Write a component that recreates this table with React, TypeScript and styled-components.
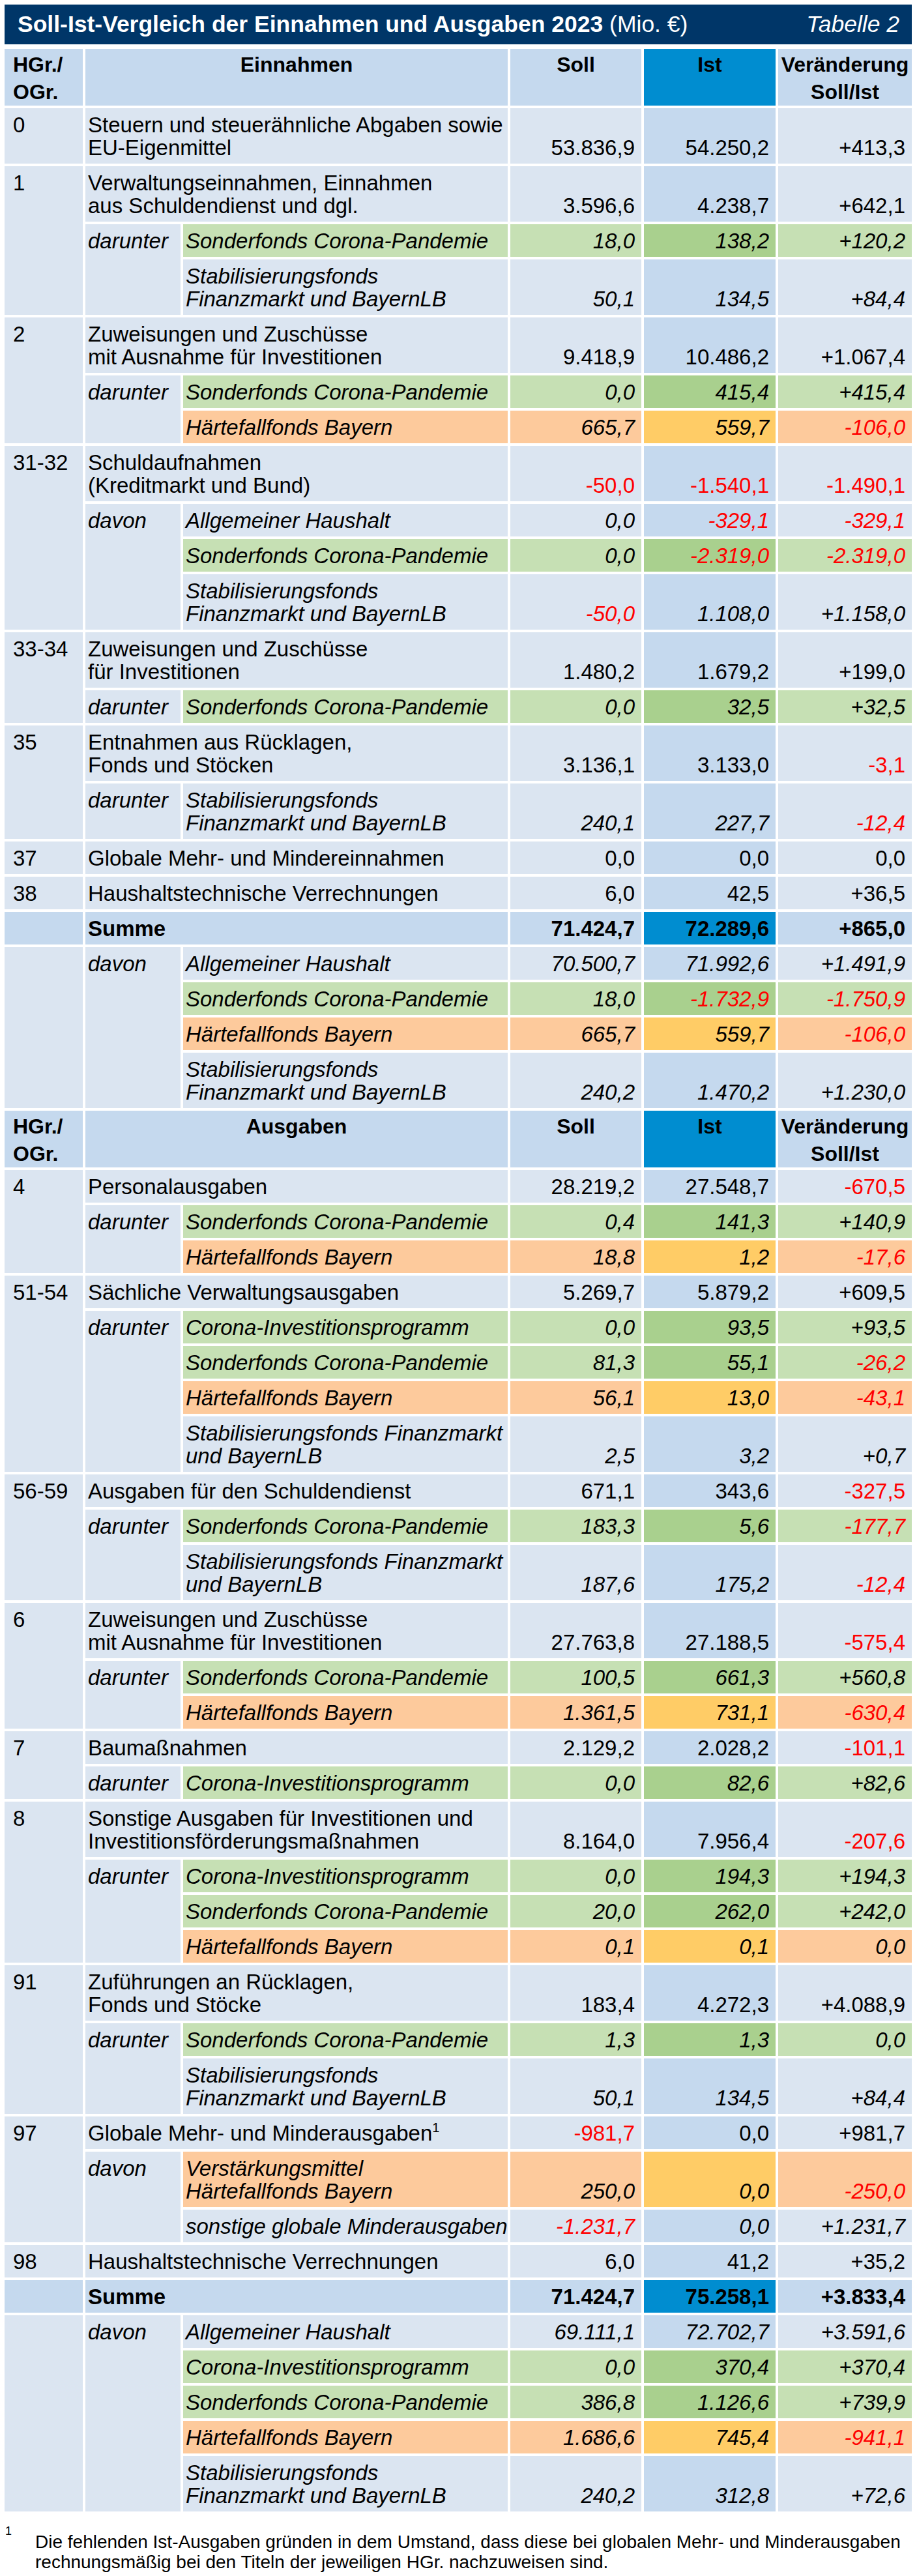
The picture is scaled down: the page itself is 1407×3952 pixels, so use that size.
import React from 'react';
import styled, { createGlobalStyle, css } from 'styled-components';

const GlobalStyle = createGlobalStyle`
  html, body { margin: 0; padding: 0; background: #ffffff; }
  body { font-family: "Liberation Sans", Arial, sans-serif; color: #000; }
`;

const C = {
  navy: '#003668',
  head: '#c5d9ee',
  body: '#dbe5f1',
  istBody: '#c5d9ee',
  istHead: '#008dd0',
  green: '#c6e0b4',
  greenIst: '#a9d08e',
  orange: '#fdca9c',
  orangeIst: '#ffcc66',
  red: '#ff0000',
};

type Tone = 'plain' | 'green' | 'orange' | 'sum';
type Col = 'soll' | 'ist' | 'ver';

const bg = (tone: Tone, col?: Col) => {
  const ist = col === 'ist';
  switch (tone) {
    case 'green':
      return ist ? C.greenIst : C.green;
    case 'orange':
      return ist ? C.orangeIst : C.orange;
    case 'sum':
      return ist ? C.istHead : C.head;
    default:
      return ist ? C.istBody : C.body;
  }
};

const colIndex: Record<Col, number> = { soll: 4, ist: 5, ver: 6 };

const Page = styled.div`
  width: 1392px;
  padding: 7px 8px 0 7px;
`;

const TitleBar = styled.div`
  height: 61px;
  margin-bottom: 7px;
  padding: 0 19px 0 20px;
  background: ${C.navy};
  color: #fff;
  display: flex;
  align-items: center;
  justify-content: space-between;
  font-size: 35.5px;
  white-space: nowrap;
`;

const TitleMain = styled.span`
  font-weight: 700;
`;

const TitleUnit = styled.span`
  font-weight: 400;
`;

const TitleTag = styled.span`
  font-style: italic;
`;

const Table = styled.div`
  display: flex;
  flex-direction: column;
  gap: 4px;
`;

const Grid = styled.div`
  display: grid;
  grid-template-columns: 120px 146px 498px 201px 202px 205px;
  column-gap: 4px;
  row-gap: 4px;
`;

const cellBase = css`
  padding: 8px 4px 7px;
  line-height: 35px;
  font-size: 33px;
  min-width: 0;
  white-space: nowrap;
`;

const HeadCell = styled.div<{ $col: number; $span?: number; $align?: 'left' | 'center'; $ist?: boolean }>`
  grid-column: ${(p) => p.$col} / span ${(p) => p.$span ?? 1};
  height: 87px;
  box-sizing: border-box;
  padding: 3px 0 0 ${(p) => (p.$align === 'left' ? '13px' : '0')};
  line-height: 42px;
  font-size: 32px;
  font-weight: 700;
  white-space: nowrap;
  text-align: ${(p) => p.$align ?? 'center'};
  background: ${(p) => (p.$ist ? C.istHead : C.head)};
`;

const CodeCell = styled.div<{ $span: number; $tone: Tone }>`
  ${cellBase};
  grid-column: 1;
  grid-row: 1 / span ${(p) => p.$span};
  padding-left: 13px;
  background: ${(p) => bg(p.$tone === 'sum' ? 'sum' : 'plain')};
`;

const DescCell = styled.div<{ $tone: Tone }>`
  ${cellBase};
  grid-column: 2 / span 2;
  grid-row: 1;
  padding-right: 0;
  background: ${(p) => bg(p.$tone)};
  font-weight: ${(p) => (p.$tone === 'sum' ? 700 : 400)};
`;

const KeyCell = styled.div<{ $row: number; $span: number }>`
  ${cellBase};
  grid-column: 2;
  grid-row: ${(p) => p.$row} / span ${(p) => p.$span};
  font-style: italic;
  background: ${C.body};
`;

const LabelCell = styled.div<{ $row: number; $tone: Tone }>`
  ${cellBase};
  grid-column: 3;
  grid-row: ${(p) => p.$row};
  padding-right: 0;
  font-style: italic;
  background: ${(p) => bg(p.$tone)};
`;

const NumCell = styled.div<{ $row: number; $col: Col; $tone: Tone; $sub?: boolean; $neg?: boolean }>`
  ${cellBase};
  grid-column: ${(p) => colIndex[p.$col]};
  grid-row: ${(p) => p.$row};
  padding-right: 10px;
  display: flex;
  align-items: flex-end;
  justify-content: flex-end;
  background: ${(p) => bg(p.$tone, p.$col)};
  color: ${(p) => (p.$neg ? C.red : '#000')};
  font-style: ${(p) => (p.$sub ? 'italic' : 'normal')};
  font-weight: ${(p) => (p.$tone === 'sum' ? 700 : 400)};
`;

const Sup = styled.sup`
  font-size: 20px;
  line-height: 0;
  vertical-align: 13px;
`;

const Footnote = styled.div`
  display: flex;
  margin-top: 21px;
`;

const FootMark = styled.div`
  width: 46px;
  flex: none;
  font-size: 18px;
  line-height: 18px;
  padding-left: 1px;
`;

const FootText = styled.div`
  font-size: 28px;
  line-height: 31px;
  margin-top: 10px;
  white-space: nowrap;
`;

type Sub = [React.ReactNode, Tone, string, string, string];

interface Group {
  code: string;
  text: React.ReactNode;
  v: [string, string, string];
  key?: string;
  subs?: Sub[];
}

interface Section {
  title: string;
  groups: Group[];
  sum: [string, string, string];
  totals: Sub[];
}

const SCP = 'Sonderfonds Corona-Pandemie';
const HFB = 'Härtefallfonds Bayern';
const CIP = 'Corona-Investitionsprogramm';
const AH = 'Allgemeiner Haushalt';
const STAB1 = (
  <>
    Stabilisierungsfonds
    <br />
    Finanzmarkt und BayernLB
  </>
);
const STAB2 = (
  <>
    Stabilisierungsfonds Finanzmarkt
    <br />
    und BayernLB
  </>
);

const sections: Section[] = [
  {
    title: 'Einnahmen',
    groups: [
      {
        code: '0',
        text: (
          <>
            Steuern und steuerähnliche Abgaben sowie
            <br />
            EU-Eigenmittel
          </>
        ),
        v: ['53.836,9', '54.250,2', '+413,3'],
      },
      {
        code: '1',
        text: (
          <>
            Verwaltungseinnahmen, Einnahmen
            <br />
            aus Schuldendienst und dgl.
          </>
        ),
        v: ['3.596,6', '4.238,7', '+642,1'],
        key: 'darunter',
        subs: [
          [SCP, 'green', '18,0', '138,2', '+120,2'],
          [STAB1, 'plain', '50,1', '134,5', '+84,4'],
        ],
      },
      {
        code: '2',
        text: (
          <>
            Zuweisungen und Zuschüsse
            <br />
            mit Ausnahme für Investitionen
          </>
        ),
        v: ['9.418,9', '10.486,2', '+1.067,4'],
        key: 'darunter',
        subs: [
          [SCP, 'green', '0,0', '415,4', '+415,4'],
          [HFB, 'orange', '665,7', '559,7', '-106,0'],
        ],
      },
      {
        code: '31-32',
        text: (
          <>
            Schuldaufnahmen
            <br />
            (Kreditmarkt und Bund)
          </>
        ),
        v: ['-50,0', '-1.540,1', '-1.490,1'],
        key: 'davon',
        subs: [
          [AH, 'plain', '0,0', '-329,1', '-329,1'],
          [SCP, 'green', '0,0', '-2.319,0', '-2.319,0'],
          [STAB1, 'plain', '-50,0', '1.108,0', '+1.158,0'],
        ],
      },
      {
        code: '33-34',
        text: (
          <>
            Zuweisungen und Zuschüsse
            <br />
            für Investitionen
          </>
        ),
        v: ['1.480,2', '1.679,2', '+199,0'],
        key: 'darunter',
        subs: [[SCP, 'green', '0,0', '32,5', '+32,5']],
      },
      {
        code: '35',
        text: (
          <>
            Entnahmen aus Rücklagen,
            <br />
            Fonds und Stöcken
          </>
        ),
        v: ['3.136,1', '3.133,0', '-3,1'],
        key: 'darunter',
        subs: [[STAB1, 'plain', '240,1', '227,7', '-12,4']],
      },
      { code: '37', text: 'Globale Mehr- und Mindereinnahmen', v: ['0,0', '0,0', '0,0'] },
      { code: '38', text: 'Haushaltstechnische Verrechnungen', v: ['6,0', '42,5', '+36,5'] },
    ],
    sum: ['71.424,7', '72.289,6', '+865,0'],
    totals: [
      [AH, 'plain', '70.500,7', '71.992,6', '+1.491,9'],
      [SCP, 'green', '18,0', '-1.732,9', '-1.750,9'],
      [HFB, 'orange', '665,7', '559,7', '-106,0'],
      [STAB1, 'plain', '240,2', '1.470,2', '+1.230,0'],
    ],
  },
  {
    title: 'Ausgaben',
    groups: [
      {
        code: '4',
        text: 'Personalausgaben',
        v: ['28.219,2', '27.548,7', '-670,5'],
        key: 'darunter',
        subs: [
          [SCP, 'green', '0,4', '141,3', '+140,9'],
          [HFB, 'orange', '18,8', '1,2', '-17,6'],
        ],
      },
      {
        code: '51-54',
        text: 'Sächliche Verwaltungsausgaben',
        v: ['5.269,7', '5.879,2', '+609,5'],
        key: 'darunter',
        subs: [
          [CIP, 'green', '0,0', '93,5', '+93,5'],
          [SCP, 'green', '81,3', '55,1', '-26,2'],
          [HFB, 'orange', '56,1', '13,0', '-43,1'],
          [STAB2, 'plain', '2,5', '3,2', '+0,7'],
        ],
      },
      {
        code: '56-59',
        text: 'Ausgaben für den Schuldendienst',
        v: ['671,1', '343,6', '-327,5'],
        key: 'darunter',
        subs: [
          [SCP, 'green', '183,3', '5,6', '-177,7'],
          [STAB2, 'plain', '187,6', '175,2', '-12,4'],
        ],
      },
      {
        code: '6',
        text: (
          <>
            Zuweisungen und Zuschüsse
            <br />
            mit Ausnahme für Investitionen
          </>
        ),
        v: ['27.763,8', '27.188,5', '-575,4'],
        key: 'darunter',
        subs: [
          [SCP, 'green', '100,5', '661,3', '+560,8'],
          [HFB, 'orange', '1.361,5', '731,1', '-630,4'],
        ],
      },
      {
        code: '7',
        text: 'Baumaßnahmen',
        v: ['2.129,2', '2.028,2', '-101,1'],
        key: 'darunter',
        subs: [[CIP, 'green', '0,0', '82,6', '+82,6']],
      },
      {
        code: '8',
        text: (
          <>
            Sonstige Ausgaben für Investitionen und
            <br />
            Investitionsförderungsmaßnahmen
          </>
        ),
        v: ['8.164,0', '7.956,4', '-207,6'],
        key: 'darunter',
        subs: [
          [CIP, 'green', '0,0', '194,3', '+194,3'],
          [SCP, 'green', '20,0', '262,0', '+242,0'],
          [HFB, 'orange', '0,1', '0,1', '0,0'],
        ],
      },
      {
        code: '91',
        text: (
          <>
            Zuführungen an Rücklagen,
            <br />
            Fonds und Stöcke
          </>
        ),
        v: ['183,4', '4.272,3', '+4.088,9'],
        key: 'darunter',
        subs: [
          [SCP, 'green', '1,3', '1,3', '0,0'],
          [STAB1, 'plain', '50,1', '134,5', '+84,4'],
        ],
      },
      {
        code: '97',
        text: (
          <>
            Globale Mehr- und Minderausgaben<Sup>1</Sup>
          </>
        ),
        v: ['-981,7', '0,0', '+981,7'],
        key: 'davon',
        subs: [
          [
            <>
              Verstärkungsmittel
              <br />
              Härtefallfonds Bayern
            </>,
            'orange',
            '250,0',
            '0,0',
            '-250,0',
          ],
          ['sonstige globale Minderausgaben', 'plain', '-1.231,7', '0,0', '+1.231,7'],
        ],
      },
      { code: '98', text: 'Haushaltstechnische Verrechnungen', v: ['6,0', '41,2', '+35,2'] },
    ],
    sum: ['71.424,7', '75.258,1', '+3.833,4'],
    totals: [
      [AH, 'plain', '69.111,1', '72.702,7', '+3.591,6'],
      [CIP, 'green', '0,0', '370,4', '+370,4'],
      [SCP, 'green', '386,8', '1.126,6', '+739,9'],
      [HFB, 'orange', '1.686,6', '745,4', '-941,1'],
      [STAB1, 'plain', '240,2', '312,8', '+72,6'],
    ],
  },
];

const cols: Col[] = ['soll', 'ist', 'ver'];

const Values: React.FC<{ row: number; v: string[]; tone: Tone; sub?: boolean }> = ({ row, v, tone, sub }) => (
  <>
    {cols.map((c, i) => (
      <NumCell key={c} $row={row} $col={c} $tone={tone} $sub={sub} $neg={v[i].startsWith('-')}>
        {v[i]}
      </NumCell>
    ))}
  </>
);

const SubRows: React.FC<{ start: number; subs: Sub[] }> = ({ start, subs }) => (
  <>
    {subs.map(([label, tone, s, i, d], idx) => (
      <React.Fragment key={idx}>
        <LabelCell $row={start + idx} $tone={tone}>
          {label}
        </LabelCell>
        <Values row={start + idx} v={[s, i, d]} tone={tone} sub />
      </React.Fragment>
    ))}
  </>
);

const GroupBlock: React.FC<{ g: Group }> = ({ g }) => {
  const n = g.subs?.length ?? 0;
  return (
    <Grid>
      <CodeCell $span={1 + n} $tone="plain">
        {g.code}
      </CodeCell>
      <DescCell $tone="plain">{g.text}</DescCell>
      <Values row={1} v={g.v} tone="plain" />
      {g.subs && (
        <>
          <KeyCell $row={2} $span={n}>
            {g.key}
          </KeyCell>
          <SubRows start={2} subs={g.subs} />
        </>
      )}
    </Grid>
  );
};

const Header: React.FC<{ title: string }> = ({ title }) => (
  <Grid>
    <HeadCell $col={1} $align="left">
      HGr./
      <br />
      OGr.
    </HeadCell>
    <HeadCell $col={2} $span={2}>
      {title}
    </HeadCell>
    <HeadCell $col={4}>Soll</HeadCell>
    <HeadCell $col={5} $ist>
      Ist
    </HeadCell>
    <HeadCell $col={6}>
      Veränderung
      <br />
      Soll/Ist
    </HeadCell>
  </Grid>
);

const SectionBlock: React.FC<{ s: Section }> = ({ s }) => (
  <>
    <Header title={s.title} />
    {s.groups.map((g) => (
      <GroupBlock key={g.code} g={g} />
    ))}
    <Grid>
      <CodeCell $span={1} $tone="sum" />
      <DescCell $tone="sum">Summe</DescCell>
      <Values row={1} v={s.sum} tone="sum" />
    </Grid>
    <Grid>
      <CodeCell $span={s.totals.length} $tone="plain" />
      <KeyCell $row={1} $span={s.totals.length}>
        davon
      </KeyCell>
      <SubRows start={1} subs={s.totals} />
    </Grid>
  </>
);

export default function App() {
  return (
    <>
      <GlobalStyle />
      <Page>
        <TitleBar>
          <span>
            <TitleMain>Soll-Ist-Vergleich der Einnahmen und Ausgaben 2023</TitleMain>
            <TitleUnit> (Mio. €)</TitleUnit>
          </span>
          <TitleTag>Tabelle 2</TitleTag>
        </TitleBar>
        <Table>
          {sections.map((s) => (
            <SectionBlock key={s.title} s={s} />
          ))}
        </Table>
        <Footnote>
          <FootMark>1</FootMark>
          <FootText>
            Die fehlenden Ist-Ausgaben gründen in dem Umstand, dass diese bei globalen Mehr- und Minderausgaben
            <br />
            rechnungsmäßig bei den Titeln der jeweiligen HGr. nachzuweisen sind.
          </FootText>
        </Footnote>
      </Page>
    </>
  );
}
